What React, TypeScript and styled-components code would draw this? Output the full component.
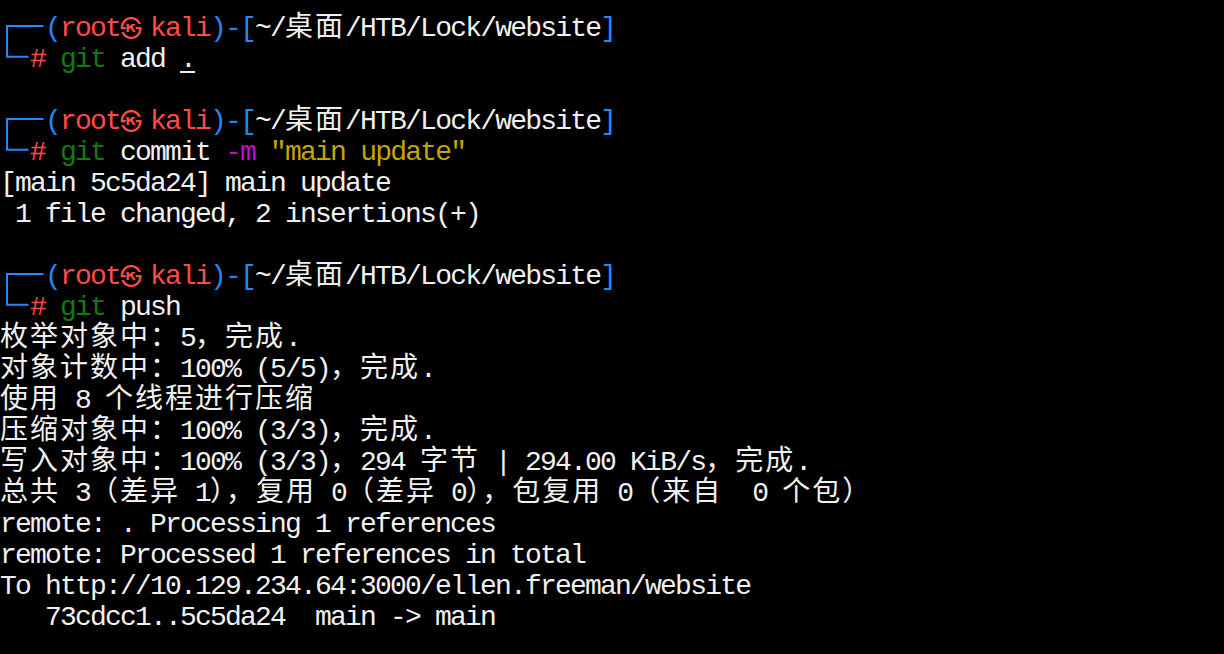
import React from "react";
import styled, { createGlobalStyle } from "styled-components";

const GlobalStyle = createGlobalStyle`
  html, body {
    margin: 0;
    padding: 0;
    background: #000;
  }
`;

const C = {
  fg: "#f0f0f0",
  blue: "#2089ff",
  red: "#ff4a4a",
  green: "#127a12",
  magenta: "#c210c8",
  yellow: "#c4a400",
};

const Terminal = styled.div`
  min-height: 100vh;
  box-sizing: border-box;
  padding-top: 13px;
  background: #000;
  color: ${C.fg};
  font-family: "Liberation Mono", "DejaVu Sans Mono", monospace;
  font-size: 28px;
  letter-spacing: -1.8px;
  white-space: pre;
`;

const Line = styled.div`
  height: 31px;
  line-height: 31px;
`;

const Wide = styled.span`
  font-family: "Noto Sans CJK SC", "Noto Sans CJK KR", sans-serif;
  font-size: 28px;
  letter-spacing: 2px;
  line-height: 20px;
`;

const Mark = styled.span`
  font-family: "Noto Sans CJK KR", "Noto Sans CJK SC", sans-serif;
  font-size: 22px;
  letter-spacing: 8px;
  line-height: 20px;
`;

const Seg = styled.span<{ $color?: string; $underline?: boolean }>`
  color: ${(p) => p.$color ?? "inherit"};
  text-decoration: ${(p) => (p.$underline ? "underline" : "none")};
  text-underline-offset: 4px;
`;

const Prompt = styled.div`
  display: grid;
  grid-template-columns: 45px auto;
  grid-template-rows: 31px 31px;
  line-height: 31px;
`;

const Bracket = styled.svg`
  grid-column: 1;
  grid-row: 1 / span 2;
  display: block;
`;

const PromptHead = styled.div`
  grid-column: 2;
  grid-row: 1;
`;

const PromptCmd = styled.div`
  grid-column: 1 / span 2;
  grid-row: 2;
  padding-left: 30px;
`;

const WIDE_RE =
  /[\u1100-\u115F\u2E80-\u303E\u3040-\uA4CF\uAC00-\uD7A3\uF900-\uFAFF\uFE30-\uFE4F\uFF00-\uFF60\uFFE0-\uFFE6\u3200-\u32FF]/;

function T({ children }: { children: string }) {
  const runs: { wide: boolean; text: string }[] = [];
  for (const ch of Array.from(children)) {
    const wide = WIDE_RE.test(ch);
    const last = runs[runs.length - 1];
    if (last && last.wide === wide) last.text += ch;
    else runs.push({ wide, text: ch });
  }
  return (
    <>
      {runs.map((r, i) =>
        r.wide ? <Wide key={i}>{r.text}</Wide> : <React.Fragment key={i}>{r.text}</React.Fragment>
      )}
    </>
  );
}

type Part = { text: string; color?: string; underline?: boolean };

function PromptBlock({ cmd }: { cmd: Part[] }) {
  return (
    <Prompt>
      <Bracket width="45" height="62" viewBox="0 0 45 62">
        <polyline
          points="43.5,13 7,13 7,43.7 28.5,43.7"
          fill="none"
          stroke={C.blue}
          strokeWidth="2"
        />
      </Bracket>
      <PromptHead>
        <Seg $color={C.blue}>(</Seg>
        <Seg $color={C.red}>
          root<Mark>㉿</Mark>kali
        </Seg>
        <Seg $color={C.blue}>)-[</Seg>
        <Seg>
          <T>~/桌面/HTB/Lock/website</T>
        </Seg>
        <Seg $color={C.blue}>]</Seg>
      </PromptHead>
      <PromptCmd>
        <Seg $color={C.red}>#</Seg>{" "}
        {cmd.map((p, i) => (
          <Seg key={i} $color={p.color} $underline={p.underline}>
            <T>{p.text}</T>
          </Seg>
        ))}
      </PromptCmd>
    </Prompt>
  );
}

function Out({ text }: { text: string }) {
  return (
    <Line>
      <T>{text}</T>
    </Line>
  );
}

export default function App() {
  return (
    <>
      <GlobalStyle />
      <Terminal>
        <PromptBlock
          cmd={[
            { text: "git", color: C.green },
            { text: " add " },
            { text: ".", underline: true },
          ]}
        />
        <Out text="" />
        <PromptBlock
          cmd={[
            { text: "git", color: C.green },
            { text: " commit " },
            { text: "-m", color: C.magenta },
            { text: " " },
            { text: '"main update"', color: C.yellow },
          ]}
        />
        <Out text="[main 5c5da24] main update" />
        <Out text=" 1 file changed, 2 insertions(+)" />
        <Out text="" />
        <PromptBlock
          cmd={[
            { text: "git", color: C.green },
            { text: " push" },
          ]}
        />
        <Out text="枚举对象中：5，完成." />
        <Out text="对象计数中：100% (5/5)，完成." />
        <Out text="使用 8 个线程进行压缩" />
        <Out text="压缩对象中：100% (3/3)，完成." />
        <Out text="写入对象中：100% (3/3)，294 字节 | 294.00 KiB/s，完成." />
        <Out text="总共 3（差异 1），复用 0（差异 0），包复用 0（来自  0 个包）" />
        <Out text="remote: . Processing 1 references" />
        <Out text="remote: Processed 1 references in total" />
        <Out text="To http://10.129.234.64:3000/ellen.freeman/website" />
        <Out text="   73cdcc1..5c5da24  main -> main" />
      </Terminal>
    </>
  );
}
